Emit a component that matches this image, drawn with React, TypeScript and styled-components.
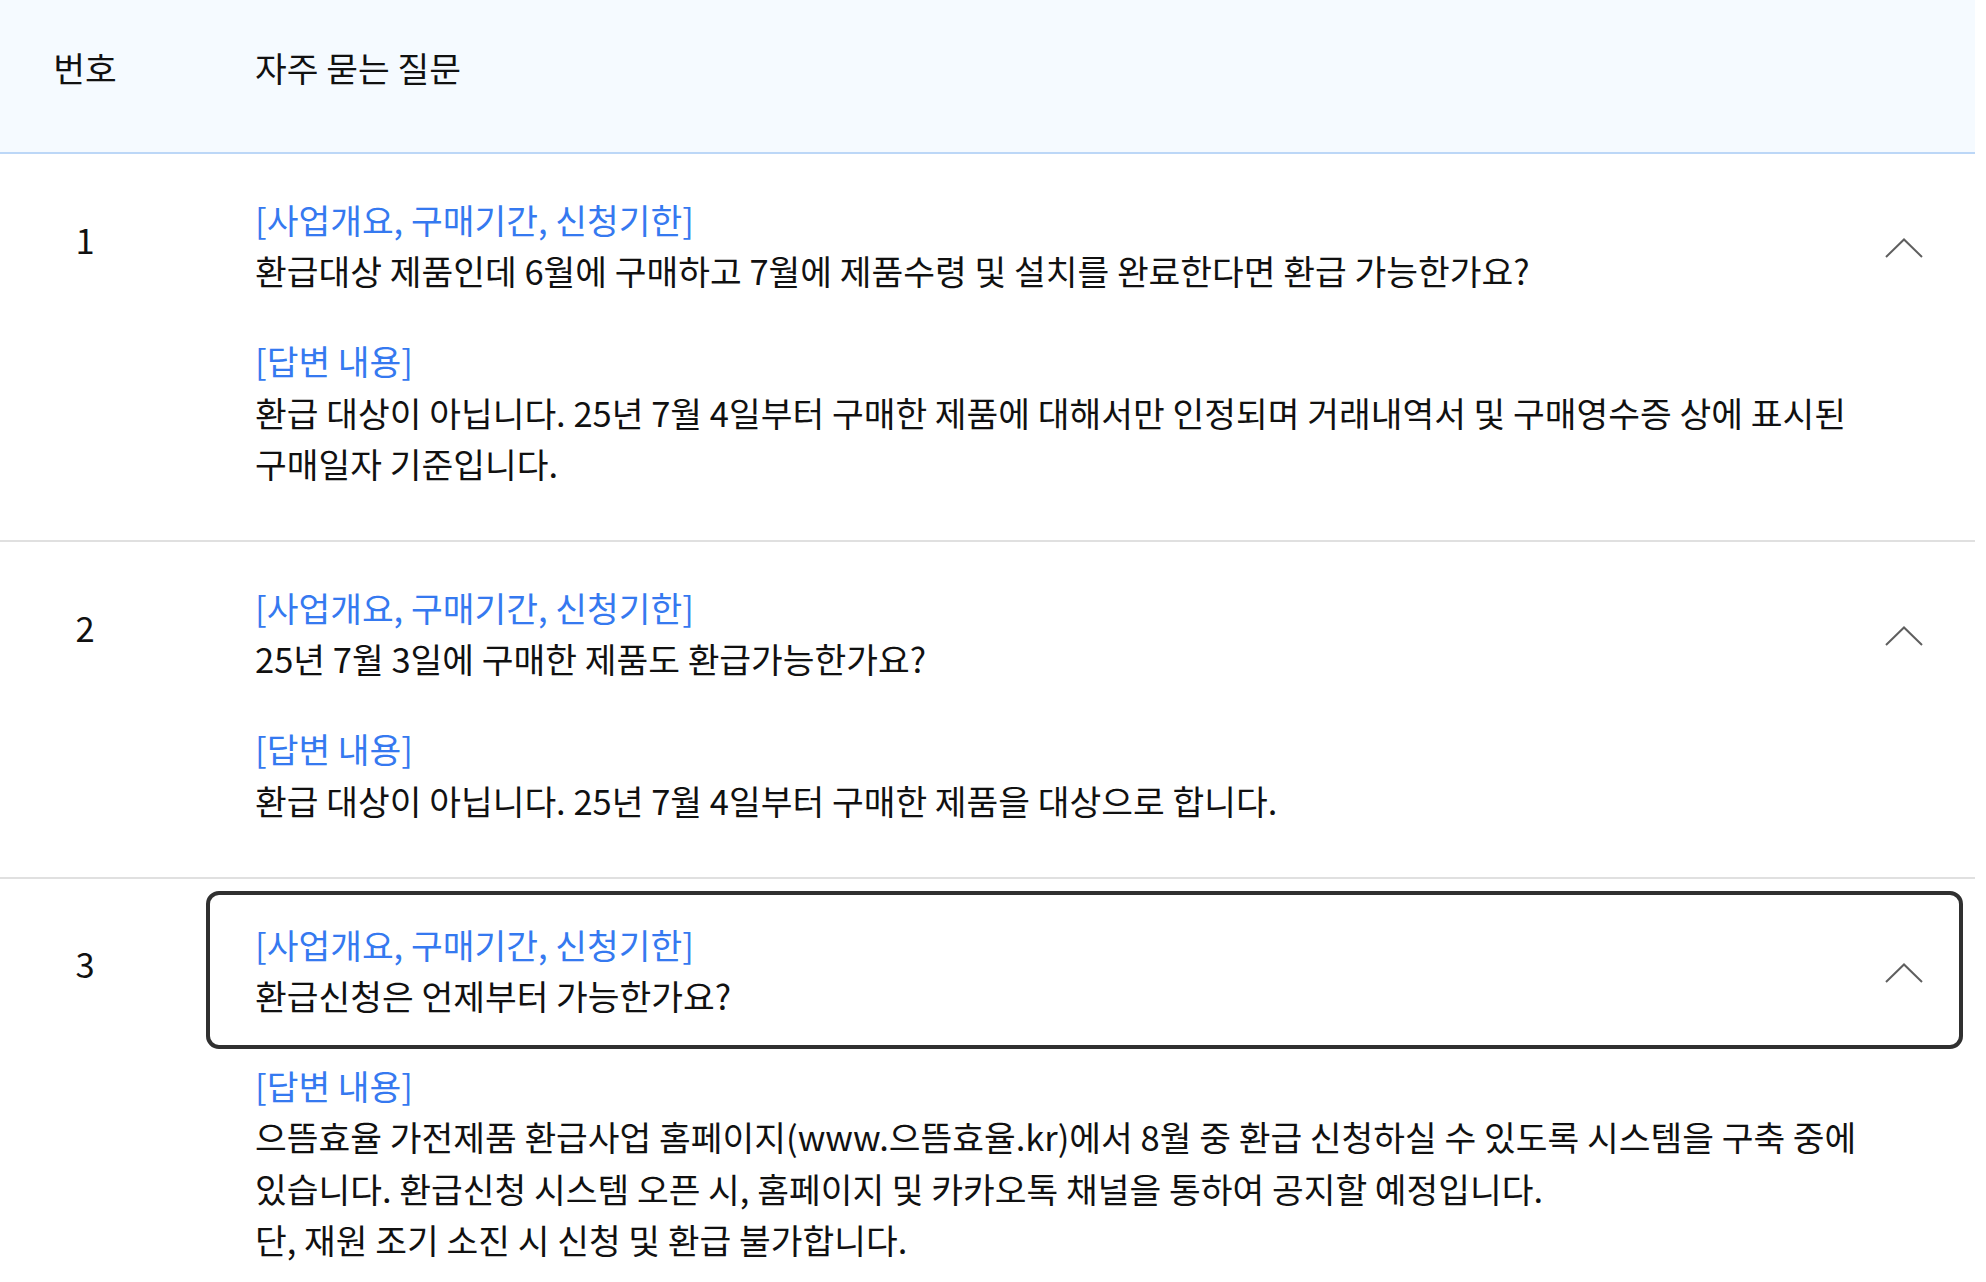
import React from 'react';
import styled, { createGlobalStyle } from 'styled-components';

type FaqItem = {
  id: number;
  category: string;
  question: string;
  answer: string[];
  focused?: boolean;
};

const faqs: FaqItem[] = [
  {
    id: 1,
    category: '[사업개요, 구매기간, 신청기한]',
    question:
      '환급대상 제품인데 6월에 구매하고 7월에 제품수령 및 설치를 완료한다면 환급 가능한가요?',
    answer: [
      '환급 대상이 아닙니다. 25년 7월 4일부터 구매한 제품에 대해서만 인정되며 거래내역서 및 구매영수증 상에 표시된 구매일자 기준입니다.',
    ],
  },
  {
    id: 2,
    category: '[사업개요, 구매기간, 신청기한]',
    question: '25년 7월 3일에 구매한 제품도 환급가능한가요?',
    answer: ['환급 대상이 아닙니다. 25년 7월 4일부터 구매한 제품을 대상으로 합니다.'],
  },
  {
    id: 3,
    category: '[사업개요, 구매기간, 신청기한]',
    question: '환급신청은 언제부터 가능한가요?',
    answer: [
      '으뜸효율 가전제품 환급사업 홈페이지(www.으뜸효율.kr)에서 8월 중 환급 신청하실 수 있도록 시스템을 구축 중에 있습니다. 환급신청 시스템 오픈 시, 홈페이지 및 카카오톡 채널을 통하여 공지할 예정입니다.',
      '단, 재원 조기 소진 시 신청 및 환급 불가합니다.',
    ],
    focused: true,
  },
];

const GlobalStyle = createGlobalStyle`
  html, body {
    margin: 0;
    padding: 0;
    background: #ffffff;
  }
  body {
    font-family: "Noto Sans CJK KR", "Noto Sans", sans-serif;
    color: #111111;
  }
`;

const Page = styled.div`
  width: 1975px;
  font-size: 34.5px;
  line-height: 51.2px;
  word-break: keep-all;
`;

const HeaderRow = styled.div`
  display: grid;
  grid-template-columns: 170px 1fr;
  column-gap: 36px;
  height: 154px;
  box-sizing: border-box;
  padding-top: 42px;
  background: #f5faff;
  border-bottom: 2px solid #bcd7f7;
`;

const HeaderNumber = styled.div`
  text-align: center;
`;

const HeaderTitle = styled.div`
  padding-left: 49px;
`;

const Row = styled.div`
  display: grid;
  grid-template-columns: 170px 1fr;
  grid-template-rows: auto auto;
  column-gap: 36px;
  padding: 12px 12px 51px 0;
  border-bottom: 2px solid #e0e0e0;
`;

const NumberCell = styled.div`
  grid-row: 1;
  grid-column: 1;
  align-self: center;
  text-align: center;
  padding-bottom: 12px;
`;

const QuestionBox = styled.div<{ $focused?: boolean }>`
  grid-row: 1;
  grid-column: 2;
  display: flex;
  align-items: center;
  gap: 40px;
  padding: 24px 36px 24px 45px;
  border: 4px solid ${({ $focused }) => ($focused ? '#303030' : 'transparent')};
  border-radius: 13px;
`;

const QuestionText = styled.div`
  flex: 1;
`;

const Category = styled.div`
  color: #3579f0;
`;

const Chevron = styled.svg`
  flex: none;
  width: 38px;
  height: 20px;
  margin-top: 6px;
`;

const Answer = styled.div`
  grid-row: 2;
  grid-column: 2;
  margin-top: 11px;
  padding: 0 40px 0 49px;
`;

const AnswerLine = styled.div``;

export default function App() {
  return (
    <>
      <GlobalStyle />
      <Page>
        <HeaderRow>
          <HeaderNumber>번호</HeaderNumber>
          <HeaderTitle>자주 묻는 질문</HeaderTitle>
        </HeaderRow>
        {faqs.map((item) => (
          <Row key={item.id}>
            <NumberCell>{item.id}</NumberCell>
            <QuestionBox $focused={item.focused}>
              <QuestionText>
                <Category>{item.category}</Category>
                <div>{item.question}</div>
              </QuestionText>
              <Chevron viewBox="0 0 38 20" aria-hidden="true">
                <polyline
                  points="1,19 19,1.5 37,19"
                  fill="none"
                  stroke="#5f5f5f"
                  strokeWidth="2"
                />
              </Chevron>
            </QuestionBox>
            <Answer>
              <Category>[답변 내용]</Category>
              {item.answer.map((line, i) => (
                <AnswerLine key={i}>{line}</AnswerLine>
              ))}
            </Answer>
          </Row>
        ))}
      </Page>
    </>
  );
}
